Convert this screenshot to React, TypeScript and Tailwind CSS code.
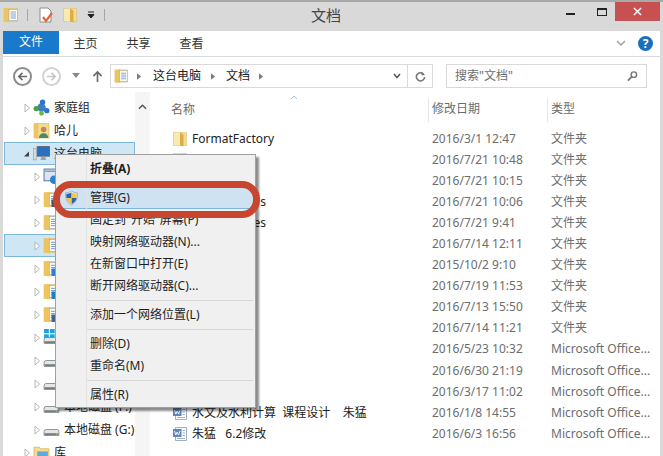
import React from "react"

function Folder({ className = "w-4 h-4" }: { className?: string }) {
  return (
    <svg viewBox="0 0 16 16" className={className}>
      <path d="M1.5 1.5 H14.5 V14.5 H1.5 Z" fill="#f5dc90" stroke="#dcc07a" strokeWidth="0.6" />
      <path d="M2 2 L8 1.5 V14.5 L2 14 Z" fill="#f9eab4" />
      <path d="M8 1.5 L11.5 3.5 V15.5 L8 14.5 Z" fill="#dfae42" />
    </svg>
  )
}

function DocFolder({ className = "w-4 h-4", badge }: { className?: string; badge?: string }) {
  return (
    <svg viewBox="0 0 16 16" className={className}>
      <path d="M1 1.5 H14.5 V14.5 H1 Z" fill="#f5dc90" stroke="#d8b866" strokeWidth="0.6" />
      <path d="M1 2 L6 0.8 V15.5 L1 14.5 Z" fill="#eec45f" />
      <rect x="6" y="2.5" width="8.5" height="11" fill="#fff" stroke="#9aa6b4" strokeWidth="0.6" />
      <path d="M7.5 5 H13 M7.5 7 H13 M7.5 9 H13 M7.5 11 H13" stroke="#6f95c4" strokeWidth="0.9" />
      {badge && <rect x="8" y="8" width="7" height="7" fill={badge} />}
    </svg>
  )
}

function WordDoc() {
  return (
    <svg viewBox="0 0 16 16" className="w-4 h-4">
      <path d="M3.5 1.5 H14.5 V14.5 H3.5 Z" fill="#fff" stroke="#8c9aae" strokeWidth="0.8" />
      <path d="M10.5 4.5 H13 M10.5 7 H13 M10.5 9.5 H13 M5 12.5 H13" stroke="#8ea6c6" strokeWidth="0.9" />
      <rect x="1" y="3" width="8.5" height="8" fill="#5b87c0" />
      <path d="M2.5 5 L3.8 9 L5.2 6 L6.6 9 L8 5" stroke="#fff" strokeWidth="0.9" fill="none" />
    </svg>
  )
}

function Drive({ system }: { system?: boolean }) {
  return (
    <svg viewBox="0 0 16 16" className="w-[17px] h-[17px]">
      {system && (
        <g fill="#1ba1e2">
          <rect x="1" y="0" width="4.5" height="4" />
          <rect x="6.5" y="0" width="4.5" height="4" />
          <rect x="1" y="5" width="4.5" height="4" />
          <rect x="6.5" y="5" width="4.5" height="4" />
        </g>
      )}
      <path d="M1 10 Q1 8 3 8 H13 Q15 8 15 10 V13.5 H1 Z" fill="#e4e6e8" stroke="#7f8488" strokeWidth="0.8" />
      <rect x="1.5" y="11.5" width="13" height="2" fill="#777c80" />
      <rect x="12" y="11.8" width="1.5" height="1" fill="#9be05c" />
    </svg>
  )
}

function Arrow({ filled }: { filled?: boolean }) {
  return (
    <svg viewBox="0 0 8 10" className="w-2 h-2.5 shrink-0">
      {filled ? (
        <path d="M6 2.5 V7.5 H1 Z" fill="#404040" />
      ) : (
        <path d="M2 1 L6.5 5 L2 9 Z" fill="#fff" stroke="#a6a6a6" strokeWidth="0.8" />
      )}
    </svg>
  )
}

function Shield() {
  return (
    <svg viewBox="0 0 16 16" className="w-[15px] h-[16px]">
      <path d="M8 0.5 C10 2 12.5 2.5 14.5 2.5 C14.5 9 13 13 8 15.5 C3 13 1.5 9 1.5 2.5 C3.5 2.5 6 2 8 0.5 Z" fill="#e8e8e8" stroke="#8a8f96" strokeWidth="0.6" />
      <path d="M8 2 V8 H2.6 C2.4 6.5 2.5 5 2.5 3.5 C4.5 3.4 6.5 3 8 2 Z" fill="#2b62b8" />
      <path d="M8 8 H13.4 C13 11 11 13 8 14.5 Z" fill="#2b62b8" />
      <path d="M8 2 C9.5 3 11.5 3.4 13.5 3.5 C13.5 5 13.6 6.5 13.4 8 H8 Z" fill="#f3c63c" />
      <path d="M8 8 V14.5 C5 13 3 11 2.6 8 Z" fill="#f3c63c" />
    </svg>
  )
}

const trees = [
  { label: "家庭组", indent: "pl-[19px]", icon: "home" },
  { label: "哈儿", indent: "pl-[19px]", icon: "user" },
  { label: "这台电脑", indent: "pl-[19px]", icon: "pc", open: true, selected: true },
  { label: "", indent: "pl-[29px]", icon: "net" },
  { label: "", indent: "pl-[29px]", icon: "video" },
  { label: "", indent: "pl-[29px]", icon: "doc" },
  { label: "", indent: "pl-[29px]", icon: "doc", selected: true },
  { label: "", indent: "pl-[29px]", icon: "dl" },
  { label: "", indent: "pl-[29px]", icon: "music" },
  { label: "", indent: "pl-[29px]", icon: "pic" },
  { label: "", indent: "pl-[29px]", icon: "win" },
  { label: "", indent: "pl-[29px]", icon: "drive" },
  { label: "", indent: "pl-[29px]", icon: "drive" },
  { label: "本地磁盘 (F:)", indent: "pl-[29px]", icon: "drive" },
  { label: "本地磁盘 (G:)", indent: "pl-[29px]", icon: "drive" },
  { label: "库", indent: "pl-[19px]", icon: "lib" },
]

function TreeIcon({ kind }: { kind: string }) {
  if (kind === "home")
    return (
      <svg viewBox="0 0 16 16" className="w-[17px] h-[17px]">
        <circle cx="8" cy="8" r="4" fill="#3f7fc9" />
        <circle cx="9" cy="3" r="2.5" fill="#2f73c4" />
        <circle cx="3" cy="9" r="2.5" fill="#4aa33a" />
        <circle cx="13" cy="11" r="2.5" fill="#2f73c4" />
        <circle cx="8" cy="13.5" r="2.2" fill="#6bb83f" />
      </svg>
    )
  if (kind === "user")
    return (
      <svg viewBox="0 0 16 16" className="w-[17px] h-[17px]">
        <path d="M1 1.5 H15 V15 H1 Z" fill="#f5dc90" stroke="#d8b866" strokeWidth="0.7" />
        <path d="M1 2 L5 1 V15.5 L1 15 Z" fill="#eec45f" />
        <circle cx="10" cy="7" r="2.6" fill="#b98a68" />
        <path d="M5.5 15 Q6 10.5 10 10.5 Q14 10.5 14.5 15 Z" fill="#4f8a5f" />
      </svg>
    )
  if (kind === "pc")
    return (
      <svg viewBox="0 0 16 16" className="w-[17px] h-[17px]">
        <rect x="0.5" y="3" width="2.5" height="11" fill="#d9dde2" stroke="#8d939a" strokeWidth="0.5" />
        <rect x="4" y="1.5" width="11.5" height="9" fill="#2a6fc2" stroke="#59616b" strokeWidth="0.8" />
        <path d="M8 11 H11.5 L12.5 14 H7 Z" fill="#9aa2ab" />
      </svg>
    )
  if (kind === "net")
    return (
      <svg viewBox="0 0 16 16" className="w-[17px] h-[17px]">
        <rect x="1" y="1" width="13" height="11" fill="#dbe6f2" stroke="#5e7fa8" />
        <path d="M2 3 H13" stroke="#5e7fa8" />
        <circle cx="10.5" cy="11" r="4" fill="#2f7fd0" />
      </svg>
    )
  const docIcon = "w-[17px] h-[17px]"
  if (kind === "video") return <DocFolder className={docIcon} badge="#47525e" />
  if (kind === "dl") return <DocFolder className={docIcon} badge="#2f7fd0" />
  if (kind === "music") return <DocFolder className={docIcon} badge="#1f7fc4" />
  if (kind === "pic") return <DocFolder className={docIcon} badge="#45618c" />
  if (kind === "doc") return <DocFolder className={docIcon} />
  if (kind === "win") return <Drive system />
  if (kind === "lib")
    return (
      <svg viewBox="0 0 16 16" className="w-[17px] h-[17px]">
        <path d="M1 3 H6 L7 4.5 H15 V14.5 H1 Z" fill="#f5dc90" stroke="#d0ad58" strokeWidth="0.7" />
        <rect x="4" y="7" width="10" height="7" fill="#5fa8d8" />
      </svg>
    )
  return <Drive />
}

const files = [
  { name: "FormatFactory", date: "2016/3/1 12:47", type: "文件夹" },
  { name: "", date: "2016/7/21 10:48", type: "文件夹" },
  { name: "", date: "2016/7/21 10:15", type: "文件夹" },
  { name: "s", date: "2016/7/21 10:06", type: "文件夹", tail: true },
  { name: "es", date: "2016/7/21 9:41", type: "文件夹", tail: true },
  { name: "", date: "2016/7/14 12:11", type: "文件夹" },
  { name: "", date: "2015/10/2 9:10", type: "文件夹" },
  { name: "", date: "2016/7/19 11:53", type: "文件夹" },
  { name: "", date: "2016/7/13 15:50", type: "文件夹" },
  { name: "", date: "2016/7/14 11:21", type: "文件夹" },
  { name: "", date: "2016/5/23 10:32", type: "Microsoft Office..." },
  { name: "", date: "2016/6/30 21:19", type: "Microsoft Office..." },
  { name: "", date: "2016/3/17 11:02", type: "Microsoft Office..." },
  { name: "水文及水利计算  课程设计    朱猛", date: "2016/1/8 14:55", type: "Microsoft Office...", word: true },
  { name: "朱猛   6.2修改", date: "2016/6/3 16:56", type: "Microsoft Office...", word: true },
]

function MenuItem({ label, bold, active }: { label: string; bold?: boolean; active?: boolean }) {
  return (
    <div className={`flex items-center ${active ? "h-[21px]" : "h-[22px]"} ${bold ? "font-bold" : ""}`}>
      <div className="w-[30px] shrink-0 flex justify-center">{active && <Shield />}</div>
      <span className="pl-[4px] whitespace-nowrap">{label}</span>
    </div>
  )
}

function MenuSep() {
  return <div className="ml-[30px] mr-[2px] my-[3px] h-px bg-[#d7d7d7]" />
}

export default function App() {
  return (
    <div
      className="relative w-[663px] h-[456px] overflow-hidden bg-[#d9d9d9] text-[12px] text-[#1e1e1e] border-t-2 border-[#a8a8a8]"
      style={{ fontFamily: '"Noto Sans", "Noto Sans CJK SC", sans-serif' }}
    >
      {/* title bar */}
      <div className="h-[29px] flex items-start">
        <div className="flex items-center gap-[8px] pl-[3px] pt-[5px]">
          <DocFolder className="w-[16px] h-[16px]" />
          <div className="w-px h-[12px] bg-[#a6a6a6]" />
          <svg viewBox="0 0 16 16" className="w-[16px] h-[16px] ml-[2px]">
            <path d="M2 1 H10 L13 4 V15 H2 Z" fill="#fff" stroke="#8d8d8d" />
            <path d="M5 10 L8 14 L14 6" stroke="#e2673c" strokeWidth="2.2" fill="none" />
          </svg>
          <Folder className="w-[16px] h-[16px]" />
          <svg viewBox="0 0 8 8" className="w-[8px] h-[8px] ml-[1px]">
            <path d="M1 1 H7 M1 3.5 H7 L4 7 Z" stroke="#222" strokeWidth="1" fill="#222" />
          </svg>
          <div className="w-px h-[12px] bg-[#a6a6a6] ml-[1px]" />
        </div>
        <div className="flex-1 text-center text-[15px] text-[#444] pt-[2px] pr-[4px]">文档</div>
        <div className="flex items-start">
          <div className="w-[38px] flex justify-center pt-[11px]">
            <div className="w-[9px] h-[2px] bg-[#222]" />
          </div>
          <div className="w-[26px] flex justify-center pt-[6px]">
            <div className="w-[10px] h-[8px] border border-t-2 border-[#222]" />
          </div>
          <div className="w-[45px] h-[19px] mr-[3px] bg-[#c75050] flex items-center justify-center">
            <svg viewBox="0 0 10 10" className="w-[9px] h-[9px]">
              <path d="M1 1 L9 9 M9 1 L1 9" stroke="#fff" strokeWidth="1.6" />
            </svg>
          </div>
        </div>
      </div>

      <div className="mx-[3px] h-[425px] bg-white flex flex-col">
        {/* ribbon tabs */}
        <div className="h-[26px] flex items-start border-b border-[#dadbdc]">
          <div className="w-[56px] h-[23px] bg-[#1979ca] text-white text-center leading-[22px]">文件</div>
          <div className="w-[53px] text-center leading-[25px] text-[#333]">主页</div>
          <div className="w-[53px] text-center leading-[25px] text-[#333]">共享</div>
          <div className="w-[53px] text-center leading-[25px] text-[#333]">查看</div>
          <div className="flex-1" />
          <svg viewBox="0 0 10 10" className="w-[10px] h-[10px] mt-[7px] mr-[12px]">
            <path d="M1 3 L5 7 L9 3" stroke="#a0a0a0" strokeWidth="1.5" fill="none" />
          </svg>
          <div className="w-[15px] h-[15px] mt-[5px] mr-[7px] rounded-full bg-[#1b6fbd] text-white text-[12px] font-bold leading-[15px] text-center">?</div>
        </div>

        {/* navigation row */}
        <div className="h-[35px] flex items-center pt-[3px]">
          <div className="flex items-center w-[108px] pl-[10px]">
            <div className="w-[19px] h-[19px] rounded-full border-2 border-[#8c8c8c] flex items-center justify-center">
              <svg viewBox="0 0 12 12" className="w-[11px] h-[11px]">
                <path d="M11 6 H2 M6 2 L2 6 L6 10" stroke="#6a6a6a" strokeWidth="1.8" fill="none" />
              </svg>
            </div>
            <div className="w-[19px] h-[19px] ml-[10px] rounded-full border-2 border-[#d2d2d2] flex items-center justify-center">
              <svg viewBox="0 0 12 12" className="w-[11px] h-[11px]">
                <path d="M1 6 H10 M6 2 L10 6 L6 10" stroke="#c6c6c6" strokeWidth="1.8" fill="none" />
              </svg>
            </div>
            <svg viewBox="0 0 8 6" className="w-[8px] h-[6px] ml-[11px]">
              <path d="M0 0 H8 L4 5 Z" fill="#8a8a8a" />
            </svg>
            <svg viewBox="0 0 12 14" className="w-[11px] h-[13px] ml-[12px]">
              <path d="M6 13 V2 M1.5 6.5 L6 2 L10.5 6.5" stroke="#6a6a6a" strokeWidth="1.8" fill="none" />
            </svg>
          </div>
          <div className="w-[323px] h-[24px] ml-[-1px] border border-[#d9d9d9] flex items-center">
            <div className="flex-1 flex items-center pl-[3px]">
              <DocFolder className="w-[15px] h-[16px]" />
              <svg viewBox="0 0 6 8" className="w-[5px] h-[7px] ml-[8px]"><path d="M0 0 L5 4 L0 8 Z" fill="#7c7c7c" /></svg>
              <span className="ml-[11px] text-[#222]">这台电脑</span>
              <svg viewBox="0 0 6 8" className="w-[5px] h-[7px] ml-[10px]"><path d="M0 0 L5 4 L0 8 Z" fill="#7c7c7c" /></svg>
              <span className="ml-[10px] text-[#222]">文档</span>
              <svg viewBox="0 0 6 8" className="w-[5px] h-[7px] ml-[9px]"><path d="M0 0 L5 4 L0 8 Z" fill="#7c7c7c" /></svg>
              <div className="flex-1" />
              <svg viewBox="0 0 8 6" className="w-[8px] h-[6px] mr-[6px]"><path d="M1 1 L4 4.5 L7 1" stroke="#555" strokeWidth="1.5" fill="none" /></svg>
            </div>
            <div className="w-[25px] h-full border-l border-[#d9d9d9] flex items-center justify-center">
              <svg viewBox="0 0 12 12" className="w-[11px] h-[11px]">
                <path d="M9.5 3.5 A4.5 4.5 0 1 0 10.5 6.5" stroke="#777" strokeWidth="1.7" fill="none" />
                <path d="M7 0.5 V4.5 H11 Z" fill="#777" />
              </svg>
            </div>
          </div>
          <div className="w-[201px] h-[24px] ml-[13px] border border-[#d9d9d9] flex items-center pl-[8px] text-[#6d6d6d]">
            <span className="flex-1">搜索"文档"</span>
            <svg viewBox="0 0 12 12" className="w-[11px] h-[12px] mr-[8px]">
              <circle cx="7.5" cy="4.5" r="3" stroke="#777" strokeWidth="1.6" fill="none" />
              <path d="M5 7 L1 11" stroke="#777" strokeWidth="2" />
            </svg>
          </div>
        </div>

        {/* main area */}
        <div className="flex-1 flex min-h-0 overflow-hidden">
          <div className="w-[132px] shrink-0 pt-[4px]">
            {trees.map((t, i) => (
              <div
                key={i}
                className={`h-[23px] flex items-center gap-[2px] ${t.indent} ml-[1px] whitespace-nowrap overflow-hidden ${
                  t.selected ? "bg-[#cfe6f5] shadow-[inset_0_0_0_1px_#7db8dc]" : ""
                }`}
              >
                <Arrow filled={t.open} />
                <TreeIcon kind={t.icon} />
                <span className="pl-[2px] text-[#222]">{t.label}</span>
              </div>
            ))}
          </div>
          <div className="w-[15px] shrink-0 bg-[#f5f5f5] flex justify-center pt-[12px]">
            <svg viewBox="0 0 10 6" className="w-[9px] h-[6px]">
              <path d="M1 5 L5 1 L9 5" stroke="#555" strokeWidth="1.6" fill="none" />
            </svg>
          </div>
          <div className="flex-1 min-w-0 pt-[6px] pl-[18px]">
            <div className="h-[24px] flex items-center text-[#6b6b6b]">
              <div className="w-[260px] pl-[3px] relative">
                名称
                <svg viewBox="0 0 8 5" className="absolute left-[122px] top-[-6px] w-[8px] h-[5px]">
                  <path d="M1 4 L4 1 L7 4" stroke="#a8c4dc" strokeWidth="1" fill="none" />
                </svg>
              </div>
              <div className="w-[119px] h-full pl-[3px] border-l border-[#e5e5e5] leading-[22px]">修改日期</div>
              <div className="flex-1 h-full pl-[3px] border-l border-[#e5e5e5] leading-[22px]">类型</div>
            </div>
            <div className="pt-[6px]">
              {files.map((f, i) => (
                <div key={i} className="h-[21.1px] flex items-center">
                  <div className="w-[261px] pl-[4px] flex items-center gap-[3px] whitespace-pre">
                    {f.word ? <WordDoc /> : <Folder />}
                    <span className={`pl-[1px] text-[#222] ${f.tail ? "w-[75px] text-right" : ""}`}>{f.name}</span>
                  </div>
                  <div className="w-[120px] pl-[3px] text-[#6d6d6d] whitespace-nowrap">{f.date}</div>
                  <div className="flex-1 pl-[2px] text-[#6d6d6d] whitespace-nowrap overflow-hidden">{f.type}</div>
                </div>
              ))}
            </div>
          </div>
        </div>
      </div>

      {/* context menu */}
      <div className="absolute left-[55px] top-[152px] w-[201px] h-[254px] bg-[#f0f0f0] border border-[#a0a0a0] pt-[2px] shadow-[3px_3px_2px_rgba(0,0,0,0.45)]">
        <div className="absolute left-[30px] top-0 bottom-0 w-px bg-[#e3e3e3]" />
        <div className="pt-[1px]">
          <MenuItem label="折叠(A)" bold />
          <div className="h-[7px]" />
          <div className="bg-[#cfe2f2] border-b border-[#7db4e0]">
            <MenuItem label="管理(G)" active />
          </div>
          <MenuItem label={'固定到"开始"屏幕(P)'} />
          <MenuItem label="映射网络驱动器(N)..." />
          <MenuItem label="在新窗口中打开(E)" />
          <MenuItem label="断开网络驱动器(C)..." />
          <MenuSep />
          <MenuItem label="添加一个网络位置(L)" />
          <MenuSep />
          <MenuItem label="删除(D)" />
          <MenuItem label="重命名(M)" />
          <MenuSep />
          <MenuItem label="属性(R)" />
        </div>
      </div>

      {/* red annotation around the manage item */}
      <div className="absolute left-[53px] top-[179px] w-[207px] h-[37px] rounded-[18px] border-[7px] border-[#c8452f]" />
    </div>
  )
}
